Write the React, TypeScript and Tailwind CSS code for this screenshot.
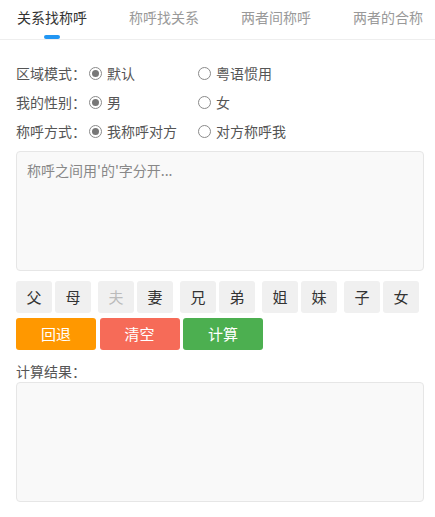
const tabs = ["关系找称呼", "称呼找关系", "两者间称呼", "两者的合称"];

const options = [
  { label: "区域模式：", items: ["默认", "粤语惯用"] },
  { label: "我的性别：", items: ["男", "女"] },
  { label: "称呼方式：", items: ["我称呼对方", "对方称呼我"] },
];

const pairs = [
  ["父", "母"],
  ["夫", "妻"],
  ["兄", "弟"],
  ["姐", "妹"],
  ["子", "女"],
];

function Radio({ checked }: Readonly<{ checked: boolean }>) {
  return (
    <span className="flex h-[13px] w-[13px] shrink-0 items-center justify-center rounded-full border border-[#8a8a8a] bg-white">
      {checked && <span className="h-[7px] w-[7px] rounded-full bg-[#777]" />}
    </span>
  );
}

export default function App() {
  return (
    <div
      className="min-h-[517px] w-[435px] overflow-hidden bg-white text-[14px] text-[#555]"
      style={{ fontFamily: '"Noto Sans CJK SC", "Noto Sans", sans-serif' }}
    >
      {/* tabs */}
      <div className="flex h-[40px] gap-[42px] overflow-hidden whitespace-nowrap border-b border-[#eeeeee] pl-[17px]">
        {tabs.map((tab, i) => (
          <div key={tab} className="flex shrink-0 flex-col items-center pt-[9px]">
            <span
              className={
                i === 0
                  ? "leading-[16px] text-[#333]"
                  : "leading-[16px] text-[#999]"
              }
            >
              {tab}
            </span>
            {i === 0 ? (
              <span className="mt-[10px] h-[4px] w-[16px] rounded-full bg-[#2196f3]" />
            ) : null}
          </div>
        ))}
      </div>

      <div className="pl-[16px] pr-[11px] pt-[19px]">
        {/* options */}
        <div className="flex flex-col">
          {options.map((row) => (
            <div key={row.label} className="flex h-[29px] items-center">
              <span className="w-[73px] shrink-0 text-[#555]">{row.label}</span>
              {row.items.map((item, i) => (
                <label key={item} className="flex w-[109px] items-center gap-[5px] text-[#555]">
                  <Radio checked={i === 0} />
                  <span>{item}</span>
                </label>
              ))}
            </div>
          ))}
        </div>

        {/* input */}
        <div className="mt-[5px] h-[120px] rounded-[4px] border border-[#e6e6e6] bg-[#f9f9f9] px-[10px] pt-[8px] text-[#888]">
          称呼之间用'的'字分开...
        </div>

        {/* keys */}
        <div className="mt-[10px] flex gap-[7px]">
          {pairs.map((pair) => (
            <div key={pair[0]} className="flex gap-[3px]">
              {pair.map((ch) => (
                <button
                  key={ch}
                  className={
                    ch === "夫"
                      ? "flex h-[32px] w-[36px] items-center justify-center rounded-[3px] bg-[#f0f0f0] text-[15px] text-[#bbb]"
                      : "flex h-[32px] w-[36px] items-center justify-center rounded-[3px] bg-[#f0f0f0] text-[15px] text-[#333]"
                  }
                >
                  {ch}
                </button>
              ))}
            </div>
          ))}
        </div>

        {/* actions */}
        <div className="mt-[5px] flex gap-[3.5px]">
          <button className="flex h-[32px] w-[80px] items-center justify-center rounded-[3px] bg-[#ff9800] text-[15px] text-white">
            回退
          </button>
          <button className="flex h-[32px] w-[80px] items-center justify-center rounded-[3px] bg-[#f66b58] text-[15px] text-white">
            清空
          </button>
          <button className="flex h-[32px] w-[80px] items-center justify-center rounded-[3px] bg-[#4caf50] text-[15px] text-white">
            计算
          </button>
        </div>

        {/* result */}
        <div className="mt-[12px] leading-[18px] text-[#555]">计算结果：</div>
        <div className="mt-[2px] h-[120px] rounded-[4px] border border-[#e6e6e6] bg-[#f9f9f9]" />
      </div>
    </div>
  );
}
